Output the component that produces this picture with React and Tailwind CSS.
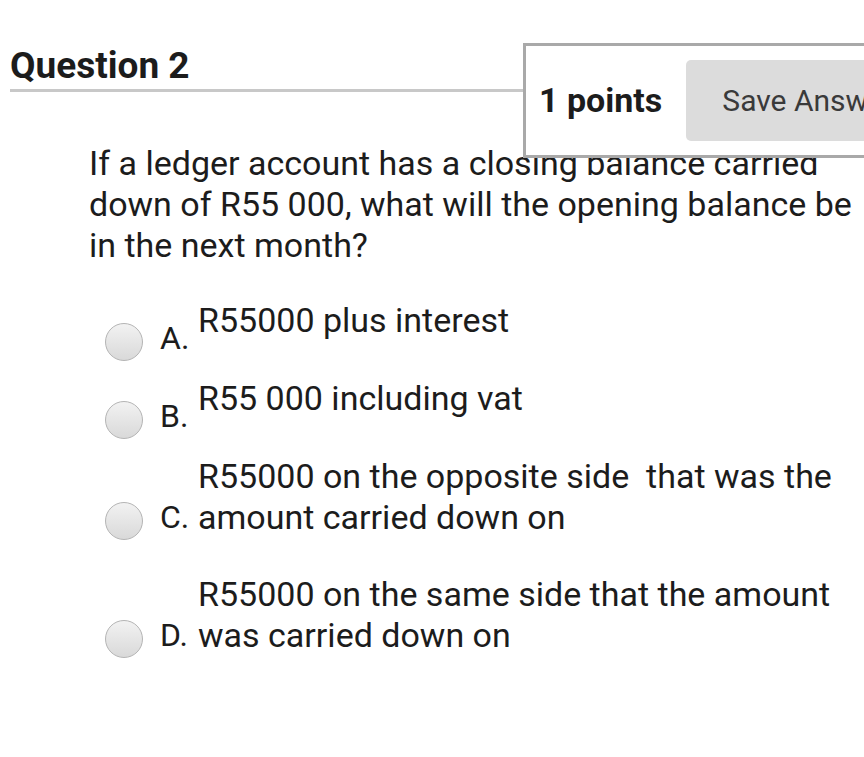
import React from 'react'

const options = [
  { letter: 'A.', lines: ['R55000 plus interest'] },
  { letter: 'B.', lines: ['R55 000 including vat'] },
  { letter: 'C.', lines: ['R55000 on the opposite side\u00a0 that was the', 'amount carried down on'] },
  { letter: 'D.', lines: ['R55000 on the same side that the amount', 'was carried down on'] },
]

const Radio = () => (
  <span className="block w-[38px] h-[38px] shrink-0 rounded-full border border-[#b4b4b4] bg-gradient-to-b from-[#f2f2f2] to-[#d9d9d9]" />
)

export default function App() {
  return (
    <div
      className="w-[864px] h-[757px] overflow-hidden bg-white text-[#1c1c1c]"
      style={{ fontFamily: 'Roboto, "Liberation Sans", sans-serif' }}
    >
      {/* header: title + points box */}
      <div className="flex items-start pt-[43px]">
        <div className="w-[523px] shrink-0 pl-[10px] pt-[3px]">
          <h2 className="text-[37px] leading-[40px] font-bold pb-[3px] border-b-[3px] border-[#c8c8c8]">
            Question 2
          </h2>
        </div>
        <div className="relative z-10 -mb-[66px] w-[420px] h-[115px] shrink-0 flex items-center border-[3px] border-[#a9a9a9] bg-white">
          <span className="ml-[13px] text-[34px] font-bold">1 points</span>
          <button className="ml-[24px] h-[81px] flex-1 rounded-[5px] bg-[#dcdcdc] pl-[36px] text-left text-[30px] text-[#3a3a3a] whitespace-nowrap">
            Save Answer
          </button>
        </div>
      </div>

      {/* question */}
      <p className="pl-[89px] mt-[51px] text-[34px] leading-[41px] whitespace-nowrap">
        If a ledger account has a closing balance carried
        <br />
        down of R55 000, what will the opening balance be
        <br />
        in the next month?
      </p>

      {/* answers */}
      <div className="flex flex-col pl-[105px] mt-[34px]">
        {options.map((o, i) => (
          <div
            key={o.letter}
            className={`flex items-end ${i === 1 ? 'mt-[19px]' : ''} ${i === 2 ? 'mt-[19px]' : ''} ${i === 3 ? 'mt-[36px]' : ''}`}
          >
            <div className="-mb-[2px]">
              <Radio />
            </div>
            <span className="ml-[17px] text-[32px] leading-[41px] w-[38px]">{o.letter}</span>
            <div className={`text-[34px] leading-[41px] whitespace-nowrap ${o.lines.length === 1 ? 'pb-[18px]' : ''}`}>
              {o.lines.map((l) => (
                <div key={l}>{l}</div>
              ))}
            </div>
          </div>
        ))}
      </div>
    </div>
  )
}
